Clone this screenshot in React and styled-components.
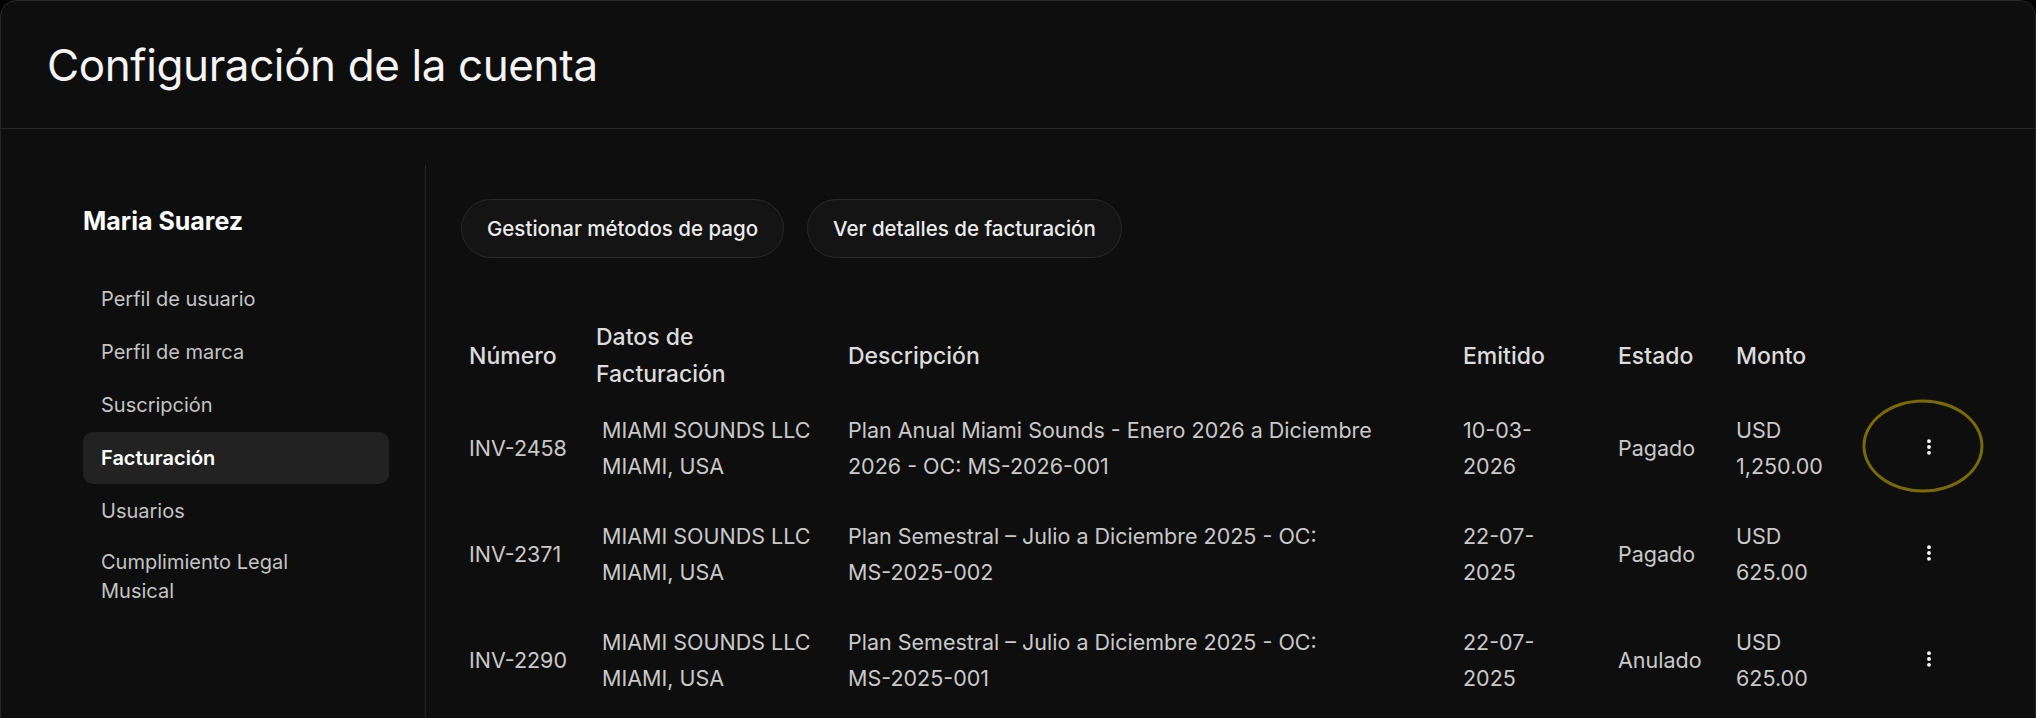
import React from 'react';
import styled, { createGlobalStyle } from 'styled-components';
import { EllipsisVertical } from 'lucide-react';

const GlobalStyle = createGlobalStyle`
  * {
    box-sizing: border-box;
  }

  body {
    margin: 0;
    background-color: #000;
    font-family: Inter, "Noto Sans", "Liberation Sans", sans-serif;
    color: #c9c9c9;
  }
`;

const Card = styled.div`
  min-height: 760px;
  background-color: #0e0e0e;
  border: 1px solid #262626;
  border-radius: 16px;
  overflow: hidden;
`;

const Header = styled.header`
  height: 128px;
  display: flex;
  align-items: center;
  padding-left: 46px;
  border-bottom: 1px solid #262626;
`;

const Title = styled.h1`
  margin: 0;
  font-size: 44px;
  font-weight: 400;
  letter-spacing: -0.4px;
  color: #f4f4f4;
`;

const Body = styled.div`
  display: flex;
  padding-top: 36px;
`;

const Sidebar = styled.aside`
  width: 425px;
  flex-shrink: 0;
  min-height: 600px;
  padding: 40px 36px 0 82px;
  border-right: 1px solid #262626;
`;

const UserName = styled.div`
  font-size: 25px;
  line-height: 32px;
  font-weight: 700;
  color: #fff;
`;

const Nav = styled.nav`
  display: flex;
  flex-direction: column;
  gap: 1px;
  margin-top: 36px;
`;

const NavItem = styled.a`
  display: flex;
  align-items: center;
  min-height: 52px;
  padding: 10px 18px;
  border-radius: 10px;
  font-size: 20px;
  line-height: 29px;
  font-weight: ${(p) => (p.$active ? 600 : 400)};
  color: ${(p) => (p.$active ? '#fff' : '#c4c4c4')};
  background-color: ${(p) => (p.$active ? '#222' : 'transparent')};
  cursor: pointer;
`;

const NavLabel = styled.span`
  max-width: 225px;
`;

const Main = styled.main`
  flex: 1;
  padding: 34px 35px 0 35px;
`;

const Actions = styled.div`
  display: flex;
  gap: 23px;
`;

const PillButton = styled.button`
  height: 59px;
  padding: 0 25px;
  border-radius: 30px;
  border: 1px solid #2a2a2a;
  background-color: #141414;
  color: #ececec;
  font-family: inherit;
  font-size: 20.5px;
  font-weight: 500;
  cursor: pointer;
`;

const Table = styled.table`
  width: 100%;
  margin-top: 59px;
  border-collapse: collapse;
  table-layout: fixed;
`;

const Th = styled.th`
  padding: 2px 8px;
  text-align: left;
  vertical-align: middle;
  font-size: 23px;
  line-height: 37px;
  font-weight: 500;
  color: #dcdcdc;
`;

const Td = styled.td`
  padding: 17px 8px 17px ${(p) => (p.$indent ? '14px' : '8px')};
  vertical-align: middle;
  font-size: 21.5px;
  line-height: 36px;
  color: #c9c9c9;
  text-align: ${(p) => (p.$center ? 'center' : 'left')};
`;

const Narrow = styled.div`
  max-width: ${(p) => p.$w}px;
`;

const OrderCode = styled.span`
  white-space: nowrap;
`;

const MenuButton = styled.button`
  position: relative;
  display: inline-flex;
  align-items: center;
  justify-content: center;
  width: 36px;
  height: 36px;
  padding: 0;
  border: none;
  background: transparent;
  color: #fff;
  cursor: pointer;
`;

const Highlight = styled.span`
  position: absolute;
  left: 50%;
  top: 50%;
  width: 121px;
  height: 93px;
  transform: translate(-55%, -51%);
  border: 3px solid #7a6b05;
  border-radius: 50%;
  pointer-events: none;
`;

const navItems = [
  'Perfil de usuario',
  'Perfil de marca',
  'Suscripción',
  'Facturación',
  'Usuarios',
  'Cumplimiento Legal Musical',
];

const invoices = [
  {
    id: 'INV-2458',
    company: 'MIAMI SOUNDS LLC',
    city: 'MIAMI, USA',
    description: 'Plan Anual Miami Sounds - Enero 2026 a Diciembre 2026 - OC:',
    order: 'MS-2026-001',
    issued: '10-03-\u200B2026',
    status: 'Pagado',
    amount: 'USD 1,250.00',
    focused: true,
  },
  {
    id: 'INV-2371',
    company: 'MIAMI SOUNDS LLC',
    city: 'MIAMI, USA',
    description: 'Plan Semestral – Julio a Diciembre 2025 - OC:',
    order: 'MS-2025-002',
    issued: '22-07-\u200B2025',
    status: 'Pagado',
    amount: 'USD 625.00',
  },
  {
    id: 'INV-2290',
    company: 'MIAMI SOUNDS LLC',
    city: 'MIAMI, USA',
    description: 'Plan Semestral – Julio a Diciembre 2025 - OC:',
    order: 'MS-2025-001',
    issued: '22-07-\u200B2025',
    status: 'Anulado',
    amount: 'USD 625.00',
  },
];

export default function App() {
  return (
    <>
      <GlobalStyle />
      <Card>
        <Header>
          <Title>Configuración de la cuenta</Title>
        </Header>
        <Body>
          <Sidebar>
            <UserName>Maria Suarez</UserName>
            <Nav>
              {navItems.map((item) => (
                <NavItem key={item} $active={item === 'Facturación'}>
                  <NavLabel>{item}</NavLabel>
                </NavItem>
              ))}
            </Nav>
          </Sidebar>
          <Main>
            <Actions>
              <PillButton>Gestionar métodos de pago</PillButton>
              <PillButton>Ver detalles de facturación</PillButton>
            </Actions>
            <Table>
              <colgroup>
                <col style={{ width: 127 }} />
                <col style={{ width: 252 }} />
                <col style={{ width: 615 }} />
                <col style={{ width: 155 }} />
                <col style={{ width: 118 }} />
                <col style={{ width: 130 }} />
                <col />
              </colgroup>
              <thead>
                <tr>
                  <Th>Número</Th>
                  <Th>
                    <Narrow $w={150}>Datos de Facturación</Narrow>
                  </Th>
                  <Th>Descripción</Th>
                  <Th>Emitido</Th>
                  <Th>Estado</Th>
                  <Th>Monto</Th>
                  <Th />
                </tr>
              </thead>
              <tbody>
                {invoices.map((inv) => (
                  <tr key={inv.id}>
                    <Td>{inv.id}</Td>
                    <Td $indent>
                      <div>{inv.company}</div>
                      <div>{inv.city}</div>
                    </Td>
                    <Td>
                      <Narrow $w={560}>
                        {inv.description} <OrderCode>{inv.order}</OrderCode>
                      </Narrow>
                    </Td>
                    <Td>
                      <Narrow $w={80}>{inv.issued}</Narrow>
                    </Td>
                    <Td>{inv.status}</Td>
                    <Td>
                      <Narrow $w={100}>{inv.amount}</Narrow>
                    </Td>
                    <Td $center>
                      <MenuButton aria-label="Acciones">
                        <EllipsisVertical size={20} strokeWidth={2.6} />
                        {inv.focused && <Highlight />}
                      </MenuButton>
                    </Td>
                  </tr>
                ))}
              </tbody>
            </Table>
          </Main>
        </Body>
      </Card>
    </>
  );
}
